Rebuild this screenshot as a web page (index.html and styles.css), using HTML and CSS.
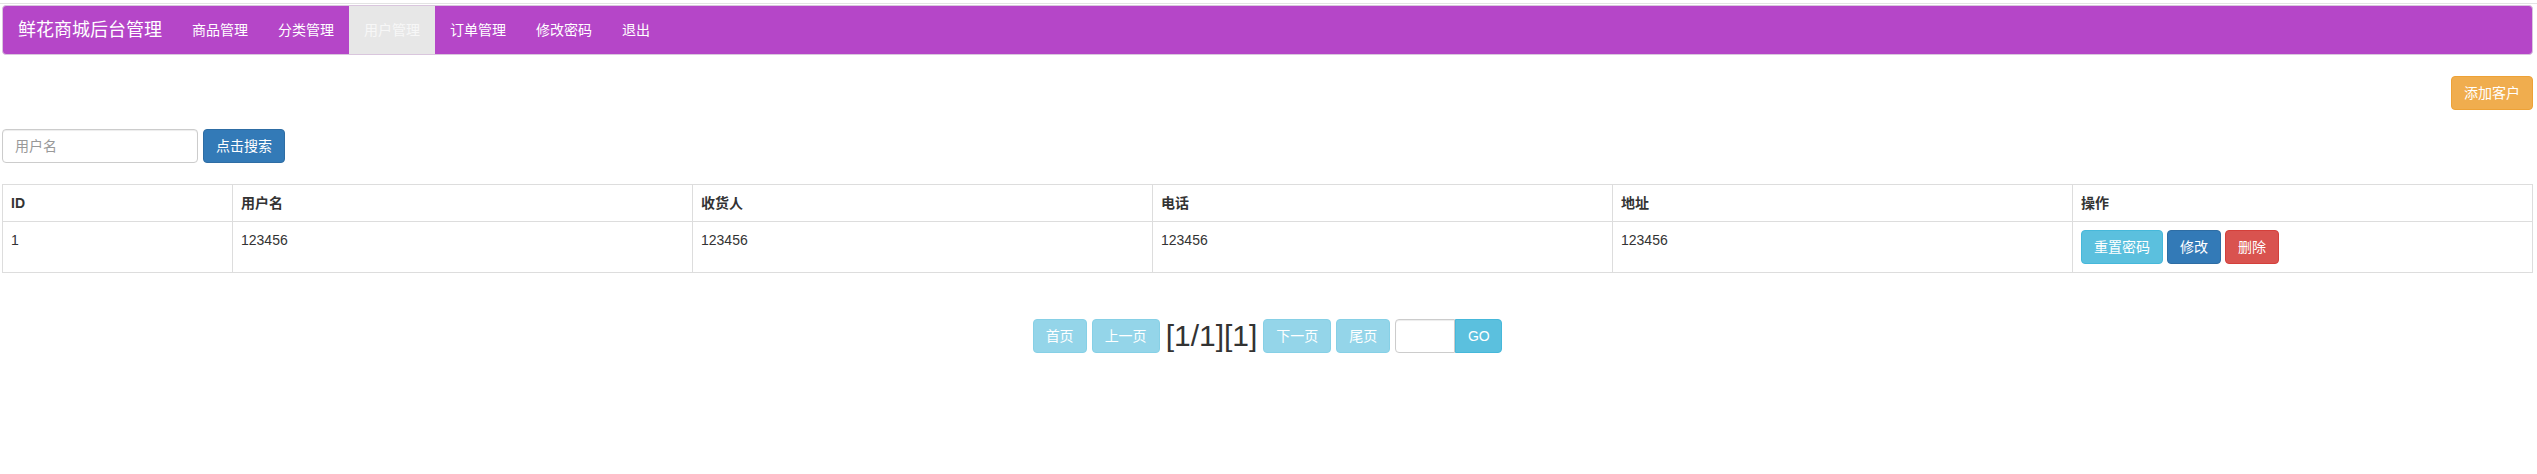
FILE: index.html
```html
<!DOCTYPE html>
<html lang="zh-CN">
<head>
<meta charset="utf-8">
<title>鲜花商城后台管理</title>
<link rel="stylesheet" href="styles.css">
</head>
<body>
<div class="topline"></div>
<div class="page">
  <nav class="navbar">
    <a class="brand" href="#">鲜花商城后台管理</a>
    <ul class="nav">
      <li><a href="#">商品管理</a></li>
      <li><a href="#">分类管理</a></li>
      <li class="active"><a href="#">用户管理</a></li>
      <li><a href="#">订单管理</a></li>
      <li><a href="#">修改密码</a></li>
      <li><a href="#">退出</a></li>
    </ul>
  </nav>

  <div class="toolbar">
    <a class="btn btn-warning" href="#">添加客户</a>
  </div>

  <form class="search">
    <input class="form-control" type="text" placeholder="用户名">
    <button class="btn btn-primary" type="button">点击搜索</button>
  </form>

  <table class="table">
    <colgroup>
      <col class="col-id">
      <col><col><col><col><col>
    </colgroup>
    <thead>
      <tr><th>ID</th><th>用户名</th><th>收货人</th><th>电话</th><th>地址</th><th>操作</th></tr>
    </thead>
    <tbody>
      <tr>
        <td>1</td><td>123456</td><td>123456</td><td>123456</td><td>123456</td>
        <td><div class="actions">
          <a class="btn btn-info" href="#">重置密码</a>
          <a class="btn btn-primary" href="#">修改</a>
          <a class="btn btn-danger" href="#">删除</a>
        </div></td>
      </tr>
    </tbody>
  </table>

  <div class="pager">
    <a class="btn btn-info disabled" href="#">首页</a>
    <a class="btn btn-info disabled" href="#">上一页</a>
    <span class="pageinfo">[1/1][1]</span>
    <a class="btn btn-info disabled" href="#">下一页</a>
    <a class="btn btn-info disabled" href="#">尾页</a>
    <span class="gogroup">
      <input class="form-control go-input" type="text">
      <a class="btn btn-info go-btn" href="#">GO</a>
    </span>
  </div>
</div>
</body>
</html>
```
FILE: styles.css
```css
* { box-sizing: border-box; }
html, body { margin: 0; padding: 0; background: #fff; }
body {
  font-family: "Liberation Sans", Arial, "Noto Sans CJK SC", sans-serif;
  font-size: 14px;
  line-height: 20px;
  color: #333;
}
.topline { height: 1px; margin-top: 3px; background: #e3e3e3; }
.page { padding: 1px 4px 0 2px; }

.navbar {
  display: flex;
  align-items: stretch;
  height: 50px;
  background: #b546c8;
  border: 1px solid #d9c6dd;
  border-radius: 4px;
}
.brand {
  display: block;
  padding: 14px 15px 15px 15px;
  font-size: 18px;
  line-height: 20px;
  color: #fff;
  text-decoration: none;
}
.nav { list-style: none; margin: 0; padding: 0; display: flex; }
.nav li a {
  display: block;
  padding: 14px 15px 14px 15px;
  line-height: 20px;
  color: #fff;
  text-decoration: none;
}
.nav li.active a { background: #e7e7e7; color: #f7f7f7; }

.btn {
  display: inline-block;
  height: 34px;
  padding: 6px 12px;
  font-family: inherit;
  font-size: 14px;
  line-height: 20px;
  border: 1px solid transparent;
  border-radius: 4px;
  color: #fff;
  text-decoration: none;
  text-align: center;
  white-space: nowrap;
  cursor: pointer;
}
.btn-warning { background: #f0ad4e; border-color: #eea236; }
.btn-primary { background: #337ab7; border-color: #2e6da4; }
.btn-info { background: #5bc0de; border-color: #46b8da; }
.btn-danger { background: #d9534f; border-color: #d43f3a; }
.btn.disabled { opacity: .65; }

.toolbar { display: flex; justify-content: flex-end; margin-top: 21px; }

.search { display: flex; gap: 5px; margin: 19px 0 0 0; }
.form-control {
  height: 34px;
  padding: 6px 12px;
  font-family: inherit;
  font-size: 14px;
  line-height: 20px;
  color: #555;
  background: #fff;
  border: 1px solid #ccc;
  border-radius: 4px;
  box-shadow: inset 0 1px 1px rgba(0,0,0,.075);
}
.search .form-control { width: 196px; }
.form-control::placeholder { color: #999; }

.table {
  width: 100%;
  margin-top: 21px;
  border-collapse: collapse;
  table-layout: fixed;
  border: 1px solid #ddd;
}
.col-id { width: 230px; }
.table th, .table td {
  padding: 8px;
  text-align: left;
  vertical-align: top;
  border: 1px solid #ddd;
  line-height: 20px;
}
.table th { font-weight: bold; }
.actions { display: flex; gap: 4px; }

.pager {
  display: flex;
  justify-content: center;
  align-items: center;
  gap: 5px;
  margin-top: 46px;
}
.pageinfo { font-size: 30px; line-height: 34px; color: #333; margin: 0 1px; }
.gogroup { display: flex; }
.go-input { width: 60px; border-radius: 4px 0 0 4px; }
.go-btn { border-radius: 0 4px 4px 0; width: 47px; padding: 6px 0; }
```
